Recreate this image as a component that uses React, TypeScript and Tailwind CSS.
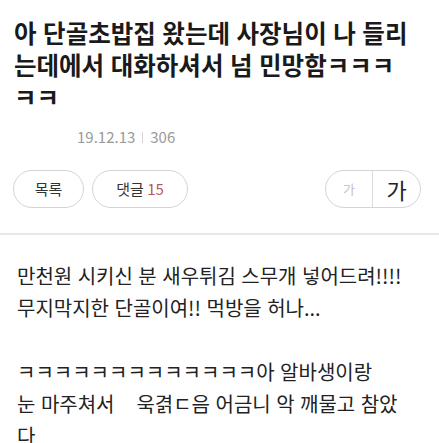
export default function App() {
  const font = { fontFamily: '"Noto Sans CJK KR", "Noto Sans", sans-serif' }
  return (
    <div className="w-[439px] h-[443px] overflow-hidden bg-white text-[#222]" style={font}>
      {/* Title */}
      <div className="pt-[17px] px-[14px]">
        <h1 className="text-[24.5px] font-bold leading-[32px] [word-spacing:1px] text-[#1a1a1a] whitespace-nowrap">
          아 단골초밥집 왔는데 사장님이 나 들리
          <br />
          는데에서 대화하셔서 넘 민망함ㅋㅋㅋ
          <br />
          ㅋㅋ
        </h1>
        <div className="mt-[14px] pl-[63px] flex items-center text-[15px] leading-[20px] text-[#9a9a9a]">
          <span>19.12.13</span>
          <span className="mx-[7px] w-px h-[11px] bg-[#d5d5d5]" />
          <span>306</span>
        </div>
      </div>

      {/* Buttons */}
      <div className="mt-[23px] px-[13px] pb-[25px] border-b-2 border-[#e8e8e8] flex items-center justify-between">
        <div className="flex gap-[8px]">
          <button className="h-[38px] w-[71px] rounded-full border border-[#d4d4d4] text-[15px] text-[#333]">
            목록
          </button>
          <button className="h-[38px] w-[96px] rounded-full border border-[#d4d4d4] text-[15px] text-[#333]">
            댓글 <span className="text-[#b5585c]">15</span>
          </button>
        </div>
        <div className="h-[38px] w-[96px] mr-[5px] rounded-full border border-[#d4d4d4] flex">
          <button className="w-[47px] border-r border-[#dcdcdc] text-[13px] text-[#c4c4c4]">가</button>
          <button className="flex-1 text-[22px] text-[#222] leading-none">가</button>
        </div>
      </div>

      {/* Body */}
      <div className="pt-[25px] px-[17px] text-[20px] leading-[32px] [word-spacing:1px] text-[#222] whitespace-pre">
        {'만천원 시키신 분 새우튀김 스무개 넣어드려!!!!\n무지막지한 단골이여!! 먹방을 허나...\n\nㅋㅋㅋㅋㅋㅋㅋㅋㅋㅋㅋㅋㅋ아 알바생이랑\n눈 마주쳐서    욱겱ㄷ음 어금니 악 깨물고 참았\n다'}
      </div>
    </div>
  )
}
